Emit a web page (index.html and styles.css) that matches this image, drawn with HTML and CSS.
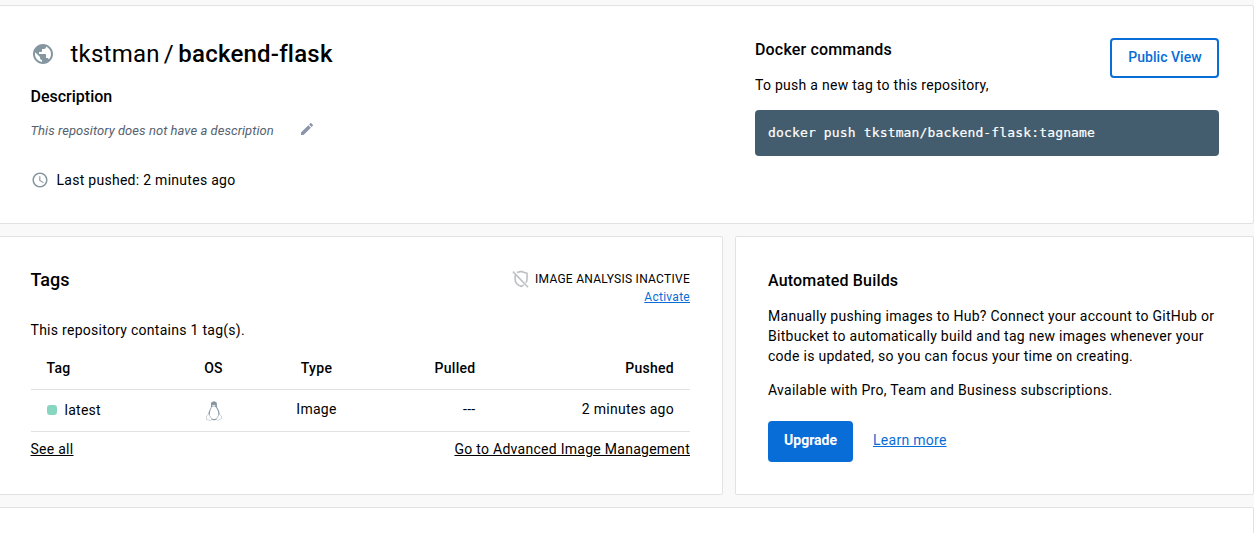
FILE: index.html
```html
<!DOCTYPE html>
<html lang="en">
<head>
<meta charset="utf-8">
<title>tkstman/backend-flask</title>
<link rel="stylesheet" href="styles.css">
</head>
<body>
<main class="page">
  <section class="card summary">
    <div class="repo">
      <h1 class="repo-title">
        <svg class="globe" viewBox="0 0 24 24"><path fill="currentColor" d="M12 2C6.48 2 2 6.48 2 12s4.48 10 10 10 10-4.48 10-10S17.52 2 12 2zm-1 17.93c-3.95-.49-7-3.85-7-7.93 0-.62.08-1.21.21-1.79L9 15v1c0 1.1.9 2 2 2v1.93zm6.9-2.54c-.26-.81-1-1.39-1.9-1.39h-1v-3c0-.55-.45-1-1-1H8v-2h2c.55 0 1-.45 1-1V7h2c1.100 0 2-.9 2-2v-.41c2.930 1.190 5 4.060 5 7.410 0 2.080-.8 3.970-2.100 5.390z"/></svg>
        <span class="title-text"><span class="owner">tkstman</span><span class="slash">/</span><span class="name">backend-flask</span></span>
      </h1>
      <h2 class="heading description-heading">Description</h2>
      <div class="description">
        <em class="description-text">This repository does not have a description</em>
        <svg class="pencil" viewBox="0 0 24 24"><path fill="currentColor" d="M3 17.250V21h3.750L17.810 9.940l-3.750-3.750L3 17.250zM20.710 7.040c.390-.390.390-1.020 0-1.410l-2.340-2.340c-.390-.390-1.020-.390-1.410 0l-1.830 1.830 3.750 3.750 1.830-1.830z"/></svg>
      </div>
      <div class="last-pushed">
        <svg class="clock" viewBox="0 0 24 24"><path fill="currentColor" d="M11.990 2C6.470 2 2 6.480 2 12s4.470 10 9.990 10C17.520 22 22 17.520 22 12S17.520 2 11.990 2zM12 20c-4.420 0-8-3.580-8-8s3.580-8 8-8 8 3.580 8 8-3.580 8-8 8zm.5-13H11v6l5.250 3.150.75-1.230-4.500-2.670z"/></svg>
        <span class="pushed-text">Last pushed: 2 minutes ago</span>
      </div>
    </div>
    <div class="commands">
      <div class="commands-top">
        <div class="commands-intro">
          <h2 class="heading">Docker commands</h2>
          <p class="commands-hint">To push a new tag to this repository,</p>
        </div>
        <button class="btn btn-outline">Public View</button>
      </div>
      <div class="code"><code class="code-text">docker push tkstman/backend-flask:tagname</code></div>
    </div>
  </section>

  <div class="columns">
    <section class="card tags">
      <header class="tags-header">
        <h2 class="tags-title">Tags</h2>
        <div class="analysis">
          <div class="analysis-status">
            <svg class="shield" viewBox="0 0 18 19" fill="none" stroke="currentColor" stroke-width="1.7"><path d="M1 1.700 17 18.200M5.200 2.700 9.500 1.500l6.400 2v6c0 1.700-.5 3-1.200 4M3.300 5.500v4.300c0 4 2.800 6.300 6.200 7.500 1-.3 2-.8 2.900-1.500"/></svg>
            <span class="status-text">IMAGE ANALYSIS INACTIVE</span>
          </div>
          <a class="link activate">Activate</a>
        </div>
      </header>
      <p class="tag-count">This repository contains 1 tag(s).</p>
      <table class="tag-table">
        <thead>
          <tr><th class="col-tag">Tag</th><th class="col-os">OS</th><th class="col-type">Type</th><th class="col-pulled">Pulled</th><th class="col-pushed">Pushed</th></tr>
        </thead>
        <tbody>
          <tr>
            <td><span class="tag-name"><i class="dot"></i><span>latest</span></span></td>
            <td class="col-os"><svg class="tux" viewBox="0 0 16 20"><path d="M5 1.800Q8-1.200 10.800 1.800L11 6Q14.500 11 14 16L11.500 18.500Q8 20 4.500 18.500L2 16Q2.200 10.500 5 6Z" fill="#8797a1"/><path d="M5.600 6.300Q8 4.800 10 6.300 12.400 10 12.400 13 11.700 17.800 8 18.300 4.300 17.400 3.700 13.500 4 9.500 5.600 6.300Z" fill="#fff"/><path d="M5.800 4.300Q8 3 9.600 4.300L8.500 5.800H7Z" fill="#dfe4e7"/><path d="M2.700 13.200 6 18.300 4.700 19.500.5 18.500V15Z M13.300 13.200 10.300 18.300 11.500 19.500 15.500 17.700V15Z" fill="#fff" stroke="#c3cacf" stroke-width=".8"/></svg></td>
            <td class="col-type">Image</td>
            <td class="col-pulled">---</td>
            <td class="col-pushed">2 minutes ago</td>
          </tr>
        </tbody>
      </table>
      <footer class="tags-footer"><a class="plain-link">See all</a><a class="plain-link">Go to Advanced Image Management</a></footer>
    </section>

    <section class="card builds">
      <h2 class="heading">Automated Builds</h2>
      <p class="builds-text">Manually pushing images to Hub? Connect your account to GitHub or Bitbucket to automatically build and tag new images whenever your code is updated, so you can focus your time on creating.</p>
      <p class="builds-note">Available with Pro, Team and Business subscriptions.</p>
      <div class="actions">
        <button class="btn btn-primary">Upgrade</button>
        <a class="link">Learn more</a>
      </div>
    </section>
  </div>

  <section class="card next"></section>
</main>
</body>
</html>
```

FILE: styles.css
```css
* { box-sizing: border-box; }
body {
  margin: 0;
  height: 533px;
  overflow: hidden;
  background: #f9f9f9;
  color: #000;
  font: 14px/20px Roboto, sans-serif;
  letter-spacing: 0.275px;
}
h1, h2, p { margin: 0; }
svg { display: block; flex: none; }
.page { height: 533px; padding-top: 5px; display: flex; flex-direction: column; gap: 12px; }
.card { background: #fff; border: 1px solid #e1e2e3; border-radius: 2px; }

.summary { height: 219px; flex: none; margin-left: -2px; padding: 32px 34px 0 31.5px; display: flex; justify-content: space-between; }
.repo-title { display: flex; align-items: center; height: 32px; gap: 16px; font-size: 24px; line-height: 32px; font-weight: 400; }
.globe { width: 24px; height: 24px; color: #8496a0; }
.title-text { white-space: nowrap; letter-spacing: 0.22px; }
.slash { margin: 0 4.5px 0 4px; }
.name { font-weight: 500; }
.heading { font-size: 16px; line-height: 24px; font-weight: 500; letter-spacing: 0.17px; }
.description-heading { margin-top: 15px; letter-spacing: 0; }
.description { display: flex; align-items: center; margin-top: 12px; height: 20px; gap: 25px; }
.description-text { font-size: 13px; color: #556270; letter-spacing: 0.05px; }
.pencil { width: 16px; height: 16px; color: #8a94ab; margin-top: -4px; }
.last-pushed { display: flex; align-items: center; gap: 8px; margin-top: 29px; }
.clock { width: 18px; height: 18px; color: #8496a0; }

.commands { width: 464px; }
.commands-top { display: flex; justify-content: space-between; align-items: flex-start; height: 72px; }
.commands-hint { margin-top: 13px; }
.btn { font: 500 14px/20px Roboto, sans-serif; letter-spacing: 0.03px; border-radius: 4px; padding: 0; }
.btn-outline { width: 109px; height: 40px; padding: 0 0 2px 1px; border: 2px solid #086dd7; color: #086dd7; background: #fff; }
.code { height: 46px; padding: 13px; background: #445d6e; color: #fff; border-radius: 4px; }
.code-text { display: block; font: 13px/20px "DejaVu Sans Mono", monospace; letter-spacing: 0.15px; -webkit-text-stroke: 0.2px #fff; }

.columns { display: grid; flex: none; grid-template-columns: 723px 519px; gap: 12px; height: 259px; }
.tags { margin-left: -2px; padding: 31px 32px 0 31.5px; }
.tags-header { display: flex; justify-content: space-between; height: 52px; }
.tags-title { font-size: 18px; line-height: 24px; font-weight: 500; letter-spacing: 0; }
.analysis { display: flex; flex-direction: column; align-items: flex-end; font-size: 12px; line-height: 18px; margin-top: 1px; }
.analysis-status { display: flex; align-items: center; gap: 6px; height: 19px; }
.status-text { letter-spacing: 0.27px; }
.shield { width: 17px; height: 18px; color: #bdc1c3; }
.tag-table { width: 100%; table-layout: fixed; border-collapse: collapse; margin-top: 7px; }
.tag-table th, .tag-table td { padding: 0 16px; text-align: left; border-bottom: 1px solid #dfe1e2; }
.tag-table th { height: 42px; padding-top: 1px; font-weight: 500; }
.tag-table td { height: 42px; padding-bottom: 2px; }
.col-tag { width: 140px; }
.col-os { width: 86px; }
.col-type { width: 120px; }
.col-pulled { width: 115px; }
.tag-table .col-os, .tag-table .col-type { text-align: center; }
.tag-table .col-pulled, .tag-table .col-pushed { text-align: right; }
.tag-name { display: flex; align-items: center; gap: 8px; margin-top: 1px; }
.dot { width: 10px; height: 10px; border-radius: 3px; background: #88d6bf; }
.tux { width: 16px; height: 20px; margin: 3px auto 0; }
.tags-footer { display: flex; justify-content: space-between; margin-top: 7px; }
.plain-link { text-decoration: underline; }
.link { color: #086dd7; text-decoration: underline; }

.builds { padding: 32px 34px 0 32px; }
.builds-text { margin-top: 13px; }
.builds-note { margin-top: 14px; }
.actions { display: flex; align-items: flex-start; gap: 20px; margin-top: 21px; line-height: 39px; }
.btn-primary { width: 85px; height: 41px; padding-bottom: 3px; background: #086dd7; color: #fff; border: 0; font-weight: 700; letter-spacing: 0; }
.next { flex: 1; margin-left: -2px; border-bottom: 0; border-radius: 2px 2px 0 0; }
```
